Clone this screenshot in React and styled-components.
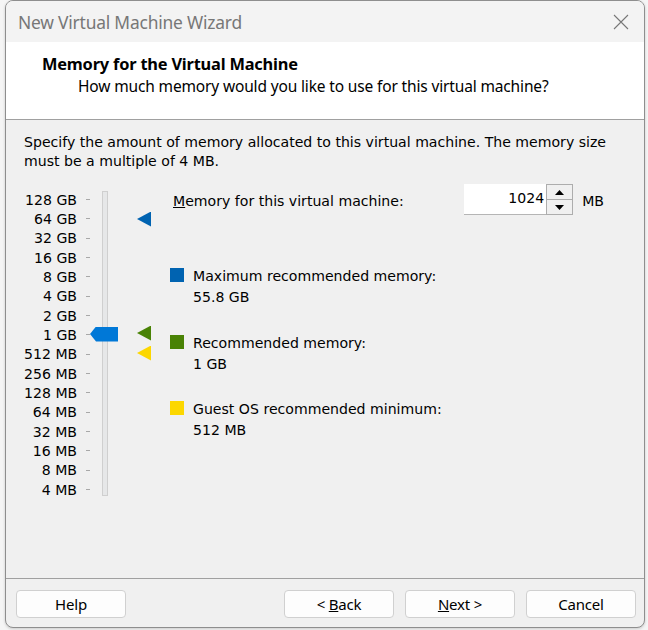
import React from "react";
import styled, { createGlobalStyle } from "styled-components";

const Global = createGlobalStyle`
  html, body { margin: 0; padding: 0; background: #f5f5f5; }
  body { width: 648px; height: 630px; overflow: hidden; }
`;

const UI = `"Noto Sans", "Open Sans", sans-serif`;
const BODY = `"DejaVu Sans", "Liberation Sans", sans-serif`;

const Page = styled.div`
  padding: 0 0 0 5px;
`;

const Window = styled.div`
  box-sizing: border-box;
  width: 640px;
  height: 628px;
  border: 1px solid #8e8e8e;
  border-radius: 8px;
  overflow: hidden;
  display: flex;
  flex-direction: column;
  background: #f0f0f0;
  box-shadow: 0 1px 3px rgba(0, 0, 0, 0.18);
`;

const TitleBar = styled.div`
  height: 41px;
  flex: none;
  background: #f3f3f3;
  display: flex;
  align-items: center;
  justify-content: space-between;
  padding: 0 15px 0 12px;
`;

const Title = styled.div`
  font-family: ${UI};
  font-size: 17.4px;
  color: #777;
  letter-spacing: -0.2px;
`;

const Header = styled.div`
  height: 78px;
  flex: none;
  box-sizing: border-box;
  background: #ffffff;
  border-bottom: 1px solid #a0a0a0;
  padding: 11px 0 0 36px;
  font-family: ${UI};
  color: #000;
`;

const Heading = styled.div`
  font-weight: 700;
  font-size: 16.4px;
  line-height: 22px;
  letter-spacing: -0.2px;
`;

const Subtitle = styled.div`
  font-size: 15.5px;
  line-height: 22px;
  padding-left: 36px;
  letter-spacing: -0.15px;
`;

const Body = styled.div`
  flex: 1;
  padding: 13px 18px 0 18px;
  font-family: ${BODY};
  font-size: 14.1px;
  color: #000;
`;

const Description = styled.p`
  margin: 0;
  line-height: 19px;
`;

const Main = styled.div`
  display: flex;
  margin-top: 13px;
`;

const SliderColumn = styled.div`
  position: relative;
  width: 146px;
  flex: none;
  padding-top: 6px;
  display: flex;
`;

const Scale = styled.div`
  display: grid;
  grid-template-rows: repeat(16, 19.333px);
`;

const ScaleRow = styled.div`
  display: flex;
  align-items: center;
`;

const ScaleLabel = styled.span`
  width: 53px;
  text-align: right;
  white-space: nowrap;
`;

const Tick = styled.span`
  width: 4px;
  height: 1px;
  margin-left: 9px;
  background: #a8a8a8;
`;

const Track = styled.div`
  box-sizing: border-box;
  width: 6px;
  height: 305px;
  margin: 0.7px 0 0 12px;
  background: #e6e7e8;
  border: 1px solid #cfcfcf;
`;

const Thumb = styled.div`
  position: absolute;
  left: 66px;
  top: 142.5px;
  width: 28px;
  height: 15px;
  background: #0078d7;
  clip-path: polygon(6px 0, 100% 0, 100% 100%, 6px 100%, 0 50%);
`;

const Marker = styled.div`
  position: absolute;
  left: 113px;
  top: ${(p) => p.$top}px;
  width: 14px;
  height: 15px;
  background: ${(p) => p.$color};
  clip-path: polygon(0 50%, 100% 0, 100% 100%);
`;

const RightColumn = styled.div`
  flex: 1;
  display: flex;
  flex-direction: column;
`;

const MemoryRow = styled.div`
  display: flex;
  align-items: center;
  height: 31px;
  padding-left: 3px;
`;

const MemoryLabel = styled.span`
  flex: 1;
  padding-top: 3px;
`;

const Spinner = styled.div`
  display: flex;
  height: 31px;
`;

const SpinInput = styled.div`
  box-sizing: border-box;
  width: 82px;
  height: 31px;
  background: #fff;
  border-bottom: 1px solid #b5b5b5;
  text-align: right;
  padding-right: 2px;
  line-height: 29px;
`;

const SpinButtons = styled.div`
  box-sizing: border-box;
  width: 27px;
  display: flex;
  flex-direction: column;
  border: 1px solid #adadad;
  background: #adadad;
  gap: 1px;
`;

const SpinButton = styled.div`
  flex: 1;
  background: #f0f0f0;
  display: flex;
  align-items: center;
  justify-content: center;
`;

const Unit = styled.span`
  margin-left: 9px;
  margin-right: 22px;
  padding-top: 2px;
`;

const Legend = styled.div`
  margin-top: 51px;
  display: flex;
  flex-direction: column;
  gap: 24.5px;
`;

const LegendItem = styled.div`
  display: flex;
  align-items: flex-start;
`;

const Swatch = styled.span`
  width: 14px;
  height: 14px;
  margin-top: 2px;
  flex: none;
  background: ${(p) => p.$color};
`;

const LegendText = styled.div`
  margin-left: 9px;
  line-height: 21px;
`;

const Footer = styled.div`
  flex: none;
  border-top: 1px solid #a0a0a0;
  padding: 11px 8px 9px 10px;
  display: flex;
  align-items: center;
`;

const Button = styled.button`
  box-sizing: border-box;
  width: 110px;
  height: 28px;
  padding: 0 0 1px;
  background: #fdfdfd;
  border: 1px solid #d0d0d0;
  border-radius: 4px;
  font-family: ${UI};
  font-size: 15px;
  color: #000;
  letter-spacing: -0.2px;
  margin-left: ${(p) => (p.$gap ? "11px" : "0")};
`;

const Spacer = styled.div`
  flex: 1;
`;

const scale = [
  "128 GB", "64 GB", "32 GB", "16 GB", "8 GB", "4 GB", "2 GB", "1 GB",
  "512 MB", "256 MB", "128 MB", "64 MB", "32 MB", "16 MB", "8 MB", "4 MB",
];

export default function App() {
  return (
    <>
      <Global />
      <Page>
        <Window>
          <TitleBar>
            <Title>New Virtual Machine Wizard</Title>
            <svg width="16" height="16" viewBox="0 0 16 16">
              <path d="M1 1 L15 15 M15 1 L1 15" stroke="#777" strokeWidth="1.1" fill="none" />
            </svg>
          </TitleBar>
          <Header>
            <Heading>Memory for the Virtual Machine</Heading>
            <Subtitle>How much memory would you like to use for this virtual machine?</Subtitle>
          </Header>
          <Body>
            <Description>
              Specify the amount of memory allocated to this virtual machine. The memory size
              <br />
              must be a multiple of 4 MB.
            </Description>
            <Main>
              <SliderColumn>
                <Scale>
                  {scale.map((s) => (
                    <ScaleRow key={s}>
                      <ScaleLabel>{s}</ScaleLabel>
                      <Tick />
                    </ScaleRow>
                  ))}
                </Scale>
                <Track />
                <Thumb />
                <Marker $color="#0063b1" $top={27.5} />
                <Marker $color="#498205" $top={141.5} />
                <Marker $color="#fcd700" $top={161.5} />
              </SliderColumn>
              <RightColumn>
                <MemoryRow>
                  <MemoryLabel>
                    <u>M</u>emory for this virtual machine:
                  </MemoryLabel>
                  <Spinner>
                    <SpinInput>1024</SpinInput>
                    <SpinButtons>
                      <SpinButton>
                        <svg width="9" height="5" viewBox="0 0 9 5">
                          <path d="M0 5 L4.5 0 L9 5 Z" fill="#000" />
                        </svg>
                      </SpinButton>
                      <SpinButton>
                        <svg width="9" height="5" viewBox="0 0 9 5">
                          <path d="M0 0 L9 0 L4.5 5 Z" fill="#000" />
                        </svg>
                      </SpinButton>
                    </SpinButtons>
                  </Spinner>
                  <Unit>MB</Unit>
                </MemoryRow>
                <Legend>
                  <LegendItem>
                    <Swatch $color="#0063b1" />
                    <LegendText>
                      Maximum recommended memory:
                      <br />
                      55.8 GB
                    </LegendText>
                  </LegendItem>
                  <LegendItem>
                    <Swatch $color="#498205" />
                    <LegendText>
                      Recommended memory:
                      <br />1 GB
                    </LegendText>
                  </LegendItem>
                  <LegendItem>
                    <Swatch $color="#fcd700" />
                    <LegendText>
                      Guest OS recommended minimum:
                      <br />
                      512 MB
                    </LegendText>
                  </LegendItem>
                </Legend>
              </RightColumn>
            </Main>
          </Body>
          <Footer>
            <Button>Help</Button>
            <Spacer />
            <Button>
              &lt; <u>B</u>ack
            </Button>
            <Button $gap>
              <u>N</u>ext &gt;
            </Button>
            <Button $gap>Cancel</Button>
          </Footer>
        </Window>
      </Page>
    </>
  );
}
